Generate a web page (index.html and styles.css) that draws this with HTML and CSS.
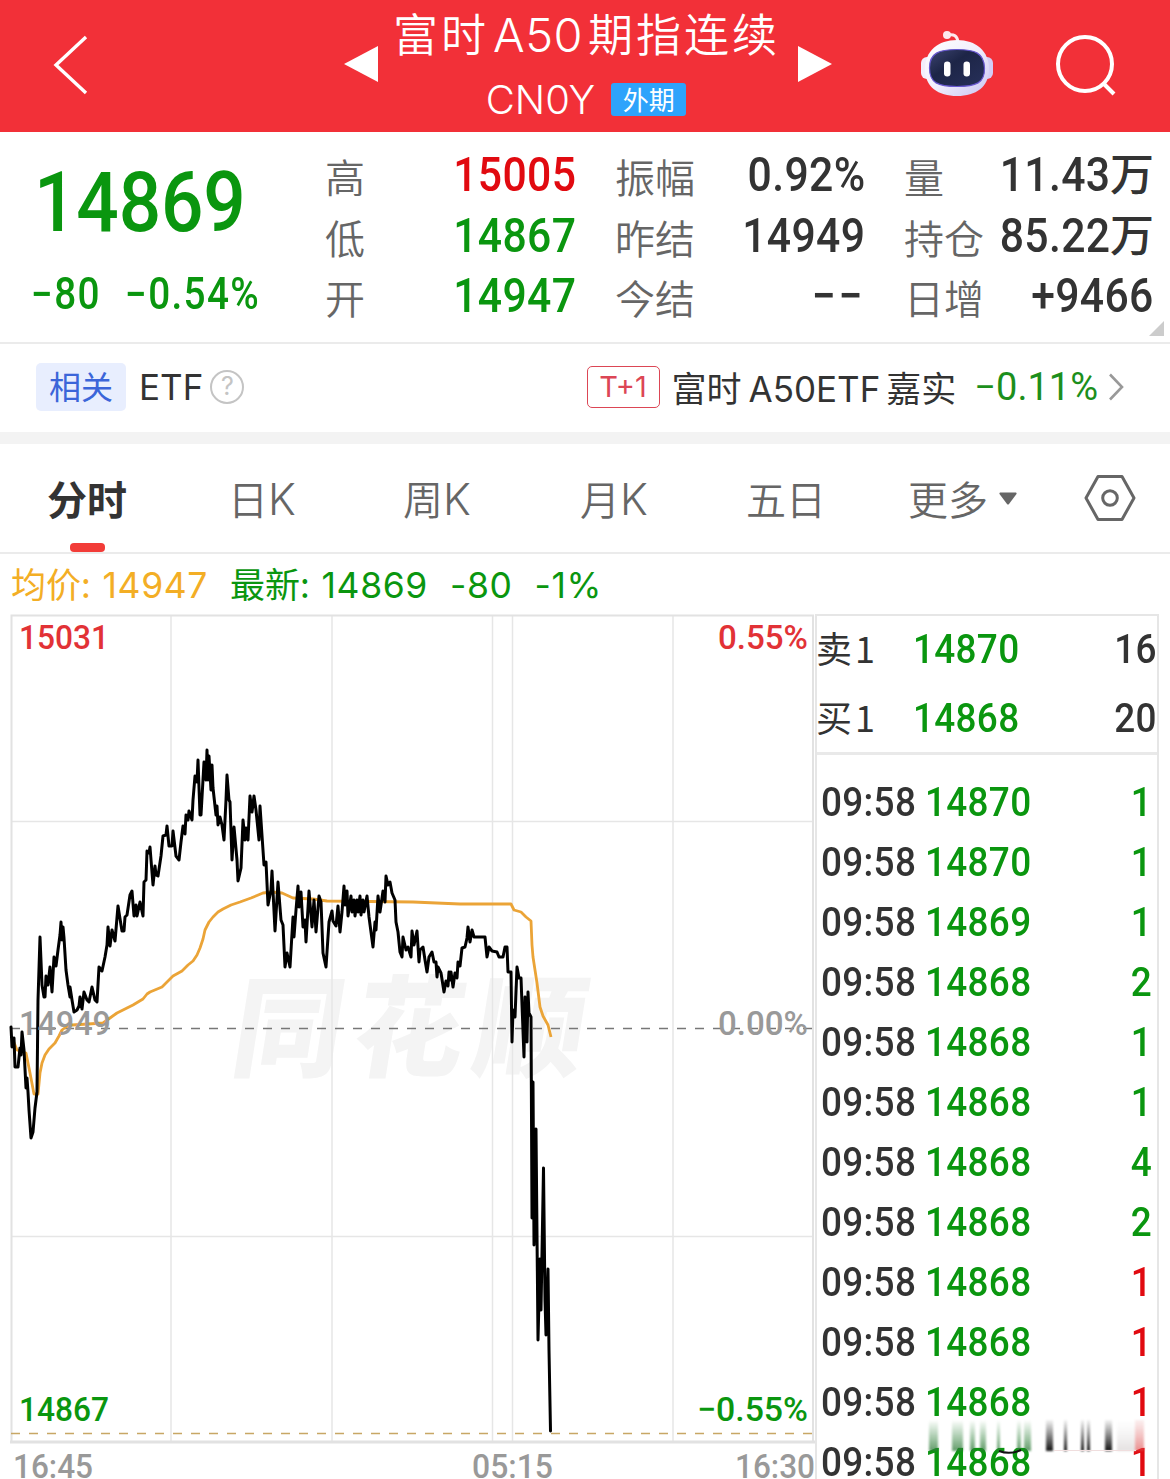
FILE: index.html
```html
<!DOCTYPE html>
<html lang="zh-CN">
<head>
    <meta charset="UTF-8">
    <meta name="viewport" content="width=device-width, initial-scale=1.0">
    <title>富时A50期指连续</title>
    <link rel="stylesheet" href="styles.css">
</head>
<body>

    <header class="header">
        <svg class="back" width="36" height="62" viewBox="0 0 36 62"><path d="M34 3L4 31l30 28" fill="none" stroke="#fff" stroke-width="3.4"/></svg>
        <svg class="prev" width="34" height="38" viewBox="0 0 34 38"><path d="M0 19L34 1v36z" fill="#fff"/></svg>
        <div class="title">
            <h1><span>富时</span><span class="latin">A50</span><span>期指连续</span></h1>
            <div class="code"><span class="symbol">CN0Y</span><span class="market">外期</span></div>
        </div>
        <svg class="next" width="34" height="38" viewBox="0 0 34 38"><path d="M34 19L0 1v36z" fill="#fff"/></svg>
        <svg class="robot" width="74" height="70" viewBox="0 0 74 70">
            <defs>
                <linearGradient id="shell" x1="0" y1="0" x2="1" y2="1">
                    <stop offset="0" stop-color="#fff"/>
                    <stop offset=".5" stop-color="#f1eefc"/>
                    <stop offset="1" stop-color="#c9c4f2"/>
                </linearGradient>
                <linearGradient id="face" x1="0" y1="0" x2="1" y2="1">
                    <stop offset="0" stop-color="#3c4470"/>
                    <stop offset=".4" stop-color="#1d2547"/>
                    <stop offset="1" stop-color="#27305a"/>
                </linearGradient>
            </defs>
            <path d="M28 6Q37 4 38 13" fill="none" stroke="#fde9ee" stroke-width="3"/>
            <circle cx="27" cy="6" r="4" fill="#fde9ee"/>
            <rect x="1" y="28" width="14" height="22" rx="6" fill="#f3eefb"/>
            <rect x="59" y="28" width="14" height="22" rx="6" fill="#d3cdf5"/>
            <path d="M37 11C56 11 69 22 69 40S56 67 37 67 5 58 5 40 18 11 37 11z" fill="url(#shell)"/>
            <path d="M37 20.500C55 20.500 64 24 64.500 39S56 57.500 37 57.500 9.500 54 9.500 39 19 20.500 37 20.500z" fill="url(#face)" stroke="#6757cf" stroke-width="1.200"/>
            <rect x="24" y="32.500" width="6.500" height="15" rx="3.200" fill="#fff"/>
            <rect x="43.500" y="32.500" width="6.500" height="15" rx="3.200" fill="#fff"/>
        </svg>
        <svg class="search" width="62" height="62" viewBox="0 0 62 62"><circle cx="30" cy="29" r="27" fill="none" stroke="#fff" stroke-width="4"/><path d="M48 48l11 11" stroke="#fff" stroke-width="4"/></svg>
    </header>

    <section class="quote">
        <div class="last">
            <div class="price"><span class="num">14869</span></div>
            <div class="change"><span class="num">−80</span><span class="num">−0.54%</span></div>
        </div>
        <dl class="stats">
            <dt>高</dt><dd class="up"><span class="num">15005</span></dd>
            <dt>振幅</dt><dd><span class="num">0.92%</span></dd>
            <dt>量</dt><dd><span class="num">11.43</span><span class="unit">万</span></dd>
            <dt>低</dt><dd class="down"><span class="num">14867</span></dd>
            <dt>昨结</dt><dd><span class="num">14949</span></dd>
            <dt>持仓</dt><dd><span class="num">85.22</span><span class="unit">万</span></dd>
            <dt>开</dt><dd class="down"><span class="num">14947</span></dd>
            <dt>今结</dt><dd><span class="num none">−−</span></dd>
            <dt>日增</dt><dd><span class="num">+9466</span></dd>
        </dl>
        <span class="corner"></span>
    </section>

    <section class="related">
        <span class="tag">相关</span>
        <span class="etf">ETF</span>
        <span class="help">?</span>
        <span class="t1">T+1</span>
        <span class="fund">富时<span class="latin">A50ETF</span>嘉实</span>
        <span class="fund-change">−0.11%</span>
        <svg class="arrow" width="16" height="28" viewBox="0 0 16 28"><path d="M2 1.500L14 14 2 26.500" fill="none" stroke="#999" stroke-width="2.600"/></svg>
    </section>

    <nav class="tabs">
        <span class="tab active">分时</span>
        <span class="tab">日<b>K</b></span>
        <span class="tab">周<b>K</b></span>
        <span class="tab">月<b>K</b></span>
        <span class="tab">五日</span>
        <span class="tab more">更多<svg width="18" height="13" viewBox="0 0 18 13"><path d="M1 .5h16q1 .5 .5 1.500L10 12q-1 1-2 0L.5 2Q0 1 1 .5z" fill="#666"/></svg></span>
        <svg class="settings" width="52" height="48" viewBox="0 0 52 48"><path d="M14 2.500h24L50 24 38 45.500H14L2 24z" fill="none" stroke="#666" stroke-width="3" stroke-linejoin="round"/><circle cx="26" cy="24" r="7.300" fill="none" stroke="#666" stroke-width="3"/></svg>
    </nav>

    <div class="legend">
        <span class="avg">均价: <i>14947</i></span>
        <span class="now">最新: <i>14869</i></span>
        <span class="now"><i>-80</i></span>
        <span class="now"><i>-1%</i></span>
    </div>

    <main class="board">
        <svg class="chart" width="815" height="865" viewBox="0 614 815 865">
            <text class="watermark" transform="translate(228 1068) skewX(-9)" textLength="352">同花顺</text>
            <g class="grid">
                <path d="M171 615V1442M332 615V1442M492.500 615V1442M512.500 615V1442M673 615V1442M11 821.500H813M11 1236.500H813"/>
                <path class="frame" d="M11.500 1442V615.500H813V1442"/>
                <path class="base" d="M10 1442H815"/>
            </g>
            <path class="zero" d="M11 1028.500H813"/>
            <path class="low" d="M11 1433.500H813"/>
            <polyline class="avg-line" points="13,1040 17,1050 26,1053 30,1073 34,1094 38,1094 40,1073 42,1063 45,1055 49,1049 55,1043 59,1036 62,1030 66,1027 72,1025 88,1024 103,1023 110,1018 117,1013 123,1010 133,1005 143,999 147,994 150,992 162,987 168,981 173,976 182,971 188,965 193,961 197,955 200,948 203,939 205,930 209,922 213,917 218,912 223,909 231,905 240,902 251,898 263,893 272,892 282,893 293,898 313,899 327,901 413,902 460,904 511,904 514,910 521,912 526,917 531,921 532,945 533,957 537,983 540,1007 543,1016 548,1025 551,1037"/>
            <polyline class="price-line" points="11,1027 12,1047 14,1038 15,1067 18,1067 20,1048 21,1055 22,1032 24,1050 26,1088 27,1078 28,1092 29,1110 31,1138 33,1132 35,1108 37,1092 38,1000 40,937 42,985 44,997 45,997 46,976 48,985 50,967 52,992 54,957 56,966 58,950 60,935 61,922 62,940 63,927 64,938 66,970 68,985 70,997 70,987 72,1000 74,1012 77,1010 79,1006 80,997 82,1009 84,992 87,1000 89,1002 92,987 95,1000 97,1002 99,967 102,971 105,957 107,945 108,927 110,946 112,930 115,941 118,906 121,925 122,931 124,931 125,917 127,915 130,895 132,891 134,916 136,905 137,916 140,902 143,916 144,882 146,880 147,851 149,853 150,847 153,885 155,866 156,875 158,876 161,856 163,836 166,835 167,826 169,846 172,846 173,831 176,856 179,860 181,842 183,826 185,834 186,815 188,820 189,811 192,820 193,800 195,776 197,782 198,760 200,815 201,815 204,762 206,780 207,750 208,780 209,756 211,790 212,765 213,788 216,815 217,806 218,825 220,817 222,825 224,840 226,800 227,775 229,800 230,802 232,860 234,827 237,860 238,881 241,868 243,820 245,840 246,828 248,840 250,796 252,812 254,796 256,810 259,840 260,806 264,865 266,862 268,905 271,890 272,871 275,931 278,882 281,920 283,925 285,967 287,953 290,967 293,917 294,937 296,910 298,886 299,907 301,892 303,927 305,920 306,942 309,891 312,927 314,900 316,932 319,896 321,902 323,953 326,967 329,922 332,911 333,921 336,926 338,906 340,932 342,912 344,886 345,905 347,891 348,916 351,896 352,912 354,900 355,916 357,900 358,912 360,896 361,915 363,900 364,912 367,896 369,917 373,947 375,922 376,930 378,896 380,912 383,891 385,902 386,876 388,885 390,882 392,893 395,900 396,922 398,932 400,952 402,957 403,937 406,950 408,947 411,957 412,931 414,945 417,931 419,962 420,950 423,947 425,960 427,972 429,957 432,952 434,962 436,962 437,977 438,967 441,973 444,992 446,981 448,986 449,972 450,980 451,972 453,987 455,973 457,978 458,962 460,966 462,948 465,947 467,938 468,927 470,942 472,930 474,937 485,937 487,957 489,947 492,951 497,952 499,957 503,957 505,947 507,947 508,972 511,972 512,1042 513,1010 515,1017 517,967 519,978 521,978 524,1057 525,997 527,1042 528,992 529,1013 531,1017 532,1218 533,1082 534,1245 536,1129 538,1340 540,1259 541,1310 543.500,1168 545,1300 546,1335 548,1269 549,1350 550.500,1431"/>
            <g class="axis">
                <text class="red" x="19" y="649" textLength="90" lengthAdjust="spacingAndGlyphs">15031</text>
                <text class="red" x="718" y="649" textLength="90" lengthAdjust="spacingAndGlyphs">0.55%</text>
                <text x="19" y="1035" textLength="92" lengthAdjust="spacingAndGlyphs">14949</text>
                <text x="718" y="1035" textLength="90" lengthAdjust="spacingAndGlyphs">0.00%</text>
                <text class="green" x="19" y="1421" textLength="90" lengthAdjust="spacingAndGlyphs">14867</text>
                <text class="green" x="697" y="1421" textLength="111" lengthAdjust="spacingAndGlyphs">−0.55%</text>
                <text x="13" y="1478" textLength="80" lengthAdjust="spacingAndGlyphs">16:45</text>
                <text x="472" y="1478" textLength="81" lengthAdjust="spacingAndGlyphs">05:15</text>
                <text x="735" y="1478" textLength="80" lengthAdjust="spacingAndGlyphs">16:30</text>
            </g>
        </svg>

        <aside class="book">
            <div class="depth">
                <div class="level"><span>卖1</span><span class="num down">14870</span><span class="num qty">16</span></div>
                <div class="level"><span>买1</span><span class="num down">14868</span><span class="num qty">20</span></div>
            </div>
            <div class="ticks">
                <div class="tick"><span class="num time">09:58</span><span class="num down">14870</span><span class="num qty down">1</span></div>
                <div class="tick"><span class="num time">09:58</span><span class="num down">14870</span><span class="num qty down">1</span></div>
                <div class="tick"><span class="num time">09:58</span><span class="num down">14869</span><span class="num qty down">1</span></div>
                <div class="tick"><span class="num time">09:58</span><span class="num down">14868</span><span class="num qty down">2</span></div>
                <div class="tick"><span class="num time">09:58</span><span class="num down">14868</span><span class="num qty down">1</span></div>
                <div class="tick"><span class="num time">09:58</span><span class="num down">14868</span><span class="num qty down">1</span></div>
                <div class="tick"><span class="num time">09:58</span><span class="num down">14868</span><span class="num qty down">4</span></div>
                <div class="tick"><span class="num time">09:58</span><span class="num down">14868</span><span class="num qty down">2</span></div>
                <div class="tick"><span class="num time">09:58</span><span class="num down">14868</span><span class="num qty up">1</span></div>
                <div class="tick"><span class="num time">09:58</span><span class="num down">14868</span><span class="num qty up">1</span></div>
                <div class="tick"><span class="num time">09:58</span><span class="num down">14868</span><span class="num qty up">1</span></div>
                <div class="tick"><span class="num time">09:58</span><span class="num down">14868</span><span class="num qty up">1</span></div>
            </div>
            <svg class="streaks" width="230" height="36" viewBox="926 1418 230 36">
                <defs>
                    <linearGradient id="fadeGreen" x1="0" y1="0" x2="0" y2="1"><stop offset="0" stop-color="#2f8a3a" stop-opacity="0"/><stop offset="1" stop-color="#2f7a3a" stop-opacity=".75"/></linearGradient>
                    <linearGradient id="fadeBlack" x1="0" y1="0" x2="0" y2="1"><stop offset="0" stop-color="#222" stop-opacity=".05"/><stop offset="1" stop-color="#111"/></linearGradient>
                    <linearGradient id="fadeRed" x1="0" y1="0" x2="0" y2="1"><stop offset="0" stop-color="#d66" stop-opacity=".1"/><stop offset="1" stop-color="#d44" stop-opacity=".6"/></linearGradient>
                    <linearGradient id="fadeGrey" x1="0" y1="0" x2="0" y2="1"><stop offset="0" stop-color="#eee" stop-opacity="0"/><stop offset="1" stop-color="#e4e0e0"/></linearGradient>
                </defs>
                <rect x="928" y="1420" width="226" height="28" fill="#fff" fill-opacity=".85"/>
                <g class="soft">
                    <path d="M1117 1420h18v31h-18z" fill="url(#fadeGrey)"/>
                    <path d="M929 1420h9v31h-9zM952 1420h11v31h-11zM970 1420h5v31h-5zM980 1420h6v31h-6zM997 1420h3v31h-3zM1017 1420h4v31h-4zM1024 1420h7v31h-7z" fill="url(#fadeGreen)"/>
                    <path d="M1046 1420h7v31h-7zM1064 1420h3v31h-3zM1081 1420h3v31h-3zM1087 1420h3v31h-3zM1105 1420h7v31h-7z" fill="url(#fadeBlack)"/>
                    <path d="M1135 1420h9v31h-9z" fill="url(#fadeRed)"/>
                </g>
                <path d="M1054 1450.500h82" stroke="#f0dede"/>
                <path d="M999 1451q11 4 22 -1" fill="none" stroke="#111" stroke-width="2"/>
            </svg>
        </aside>
    </main>

</body>
</html>
```

FILE: styles.css
```css
* {
    box-sizing: border-box;
}
body {
    margin: 0;
    width: 1170px;
    height: 1479px;
    overflow: hidden;
    background: #fff;
    color: #333;
    font-family: "Noto Sans CJK SC", sans-serif;
}
i, b {
    font-style: normal;
    font-weight: 400;
}
.num {
    display: inline-block;
    font-family: Roboto, sans-serif;
    font-weight: 500;
    letter-spacing: .008em;
    transform: scaleX(.89);
    transform-origin: left center;
}
.up {
    color: #e10a10;
}
.down {
    color: #0a960f;
}

/* header */
.header {
    display: flex;
    align-items: flex-start;
    height: 132px;
    padding-top: 34px;
    background: #f23038;
    color: #fff;
}
.back {
    margin-left: 52px;
}
.prev {
    margin: 11px 0 0 256px;
}
.title {
    width: 420px;
    margin-top: -34px;
    text-align: center;
}
.title h1 {
    display: flex;
    justify-content: center;
    align-items: baseline;
    margin: 0 0 0 -3px;
    font-size: 45px;
    font-weight: 350;
    line-height: 65px;
    letter-spacing: 3px;
}
.title .latin {
    margin: 0 5px 0 4px;
    font-family: Inter, sans-serif;
    font-weight: 350;
    font-size: 47px;
    letter-spacing: .4px;
}
.code {
    display: flex;
    justify-content: center;
    align-items: center;
    gap: 16px;
    height: 68px;
    margin: -2px 0 0 -4px;
}
.symbol {
    font-family: Inter, sans-serif;
    font-weight: 350;
    font-size: 40px;
}
.market {
    width: 75px;
    height: 33px;
    border-radius: 3px;
    background: #2ea3fb;
    font-size: 26px;
    line-height: 31px;
}
.next {
    margin-top: 11px;
}
.robot {
    margin: -5px 0 0 88px;
}
.search {
    margin: 1px 0 0 61px;
}

/* quote */
.quote {
    position: relative;
    display: flex;
    height: 212px;
    border-bottom: 2px solid #ebebeb;
}
.last {
    width: 325px;
    padding: 14px 0 0 34px;
    color: #0a960f;
}
.price {
    height: 98px;
    font-size: 84px;
    line-height: 98px;
    letter-spacing: 0;
}
.price .num {
    letter-spacing: -.2px;
}
.change {
    display: flex;
    margin: 25px 0 0 -3px;
    font-size: 43.500px;
    line-height: 52px;
}
.change .num {
    letter-spacing: .035em;
}
.change .num:first-child {
    width: 94px;
}
.stats {
    display: grid;
    grid-template-columns: 80px 171px 119px 170px 119px 170px;
    grid-template-rows: repeat(3, 60.500px);
    margin: 13px 0 0;
    line-height: 60px;
}
.stats dt {
    padding-left: 39px;
    color: #666;
    font-size: 40px;
    font-weight: 350;
    line-height: 62px;
    white-space: nowrap;
}
.stats dt:nth-of-type(3n+1) {
    padding-left: 0;
}
.stats dd {
    display: flex;
    justify-content: flex-end;
    margin: 0;
    font-size: 48px;
}
.stats .num {
    transform-origin: right center;
}
.stats .none {
    letter-spacing: .06em;
}
.unit {
    font-size: 44px;
    font-weight: 500;
    line-height: 54px;
}
.corner {
    position: absolute;
    right: 6px;
    bottom: 6px;
    border-left: 15px solid transparent;
    border-bottom: 15px solid #ccc;
}

/* related fund */
.related {
    display: flex;
    align-items: center;
    height: 100px;
    padding: 0 46px 2px 36px;
    border-bottom: 12px solid #f3f3f3;
    font-size: 35px;
}
.tag {
    width: 90px;
    height: 48px;
    border-radius: 5px;
    background: #e8eefe;
    color: #3b65d9;
    font-size: 32px;
    line-height: 45px;
    text-align: center;
}
.etf {
    margin-left: 13px;
    font-family: Inter, sans-serif;
    font-size: 35px;
}
.help {
    width: 34px;
    height: 34px;
    margin-left: 7px;
    border: 2.500px solid #c4c4c4;
    border-radius: 50%;
    color: #c4c4c4;
    font-family: Inter, sans-serif;
    font-size: 25px;
    line-height: 29px;
    text-align: center;
}
.t1 {
    width: 73px;
    height: 42px;
    margin-left: auto;
    border: 1.500px solid #dc4655;
    border-radius: 5px;
    color: #dc4655;
    font-family: Inter, sans-serif;
    font-size: 29px;
    line-height: 39px;
    text-align: center;
}
.fund {
    margin: -2px 0 0 12px;
    font-size: 35px;
}
.fund .latin {
    margin: 0 6px 0 7px;
    font-family: Inter, sans-serif;
}
.fund-change {
    margin: 0 10px 0 18px;
    color: #1c8f1c;
    font-family: Roboto, sans-serif;
    font-size: 38px;
}

/* tabs */
.tabs {
    display: grid;
    grid-template-columns: 181px 175px 177px 166px 162px 1fr auto;
    align-items: center;
    height: 110px;
    padding: 0 34px 0 47px;
    border-bottom: 2px solid #ebebeb;
    color: #666;
    font-size: 40px;
    font-weight: 350;
}
.tab {
    line-height: 104px;
    white-space: nowrap;
}
.tab b {
    font-family: Inter, sans-serif;
    font-size: 43px;
    font-weight: 300;
}
.tab.active {
    position: relative;
    color: #333;
    font-weight: 700;
}
.tab.active::after {
    content: "";
    position: absolute;
    left: 23px;
    bottom: -2px;
    width: 35px;
    height: 9px;
    border-radius: 4px;
    background: #f23c38;
}
.tab.more {
    display: flex;
    align-items: center;
    gap: 11px;
}
.tab.active, .tab.more {
    height: 104px;
}

/* legend */
.legend {
    display: flex;
    height: 60px;
    padding-left: 11px;
    font-size: 35px;
    line-height: 58px;
    white-space: pre;
}
.legend span {
    margin-right: 22px;
}
.legend i {
    font-family: Inter, sans-serif;
    font-size: 35.500px;
    letter-spacing: .6px;
}
.legend span:nth-child(-n+2) i {
    margin-left: 4px;
}
.avg {
    color: #f3ae25;
}
.now {
    color: #0a960f;
}

/* chart */
.board {
    display: flex;
    height: 865px;
}
.chart {
    flex: none;
}
.chart path, .chart polyline {
    fill: none;
}
.grid {
    stroke: #e6e6e6;
    stroke-width: 1.500;
}
.frame {
    stroke: #e2e2e2;
    stroke-width: 2;
}
.base {
    stroke: #e2e2e2;
    stroke-width: 3;
}
.zero {
    stroke: #777;
    stroke-width: 1.600;
    stroke-dasharray: 9 9;
}
.low {
    stroke: #c8a765;
    stroke-width: 1.400;
    stroke-dasharray: 9 9;
}
.avg-line {
    stroke: #eba437;
    stroke-width: 2.800;
    stroke-linejoin: round;
}
.price-line {
    stroke: #000;
    stroke-width: 3;
    stroke-linejoin: round;
    stroke-linecap: round;
}
.watermark {
    fill: #f4f4f4;
    font-size: 110px;
    font-weight: 900;
}
.axis {
    fill: #999;
    font-family: Roboto, sans-serif;
    font-size: 34px;
    font-weight: 500;
}
.axis .red {
    fill: #e23236;
}
.axis .green {
    fill: #0a960f;
}

/* order book */
.book {
    position: relative;
    width: 344px;
    border: solid #e6e6e6;
    border-width: 2px 2px 0 2px;
    font-size: 41.500px;
}
.depth {
    height: 139px;
    border-bottom: 3px solid #e9e9e9;
}
.level, .tick {
    display: grid;
    height: 69px;
    line-height: 66px;
}
.level {
    grid-template-columns: 96px 1fr auto;
}
.level span:first-child {
    margin-left: -1px;
    font-size: 36px;
    line-height: 63px;
    letter-spacing: 3px;
}
.qty {
    transform-origin: right center;
}
.ticks {
    padding: 17px 5px 0 4px;
}
.tick {
    grid-template-columns: 104px 1fr auto;
    height: 60px;
    line-height: 60px;
}
.streaks {
    position: absolute;
    left: 109px;
    top: 802px;
}
.soft {
    filter: blur(.8px);
}
```
